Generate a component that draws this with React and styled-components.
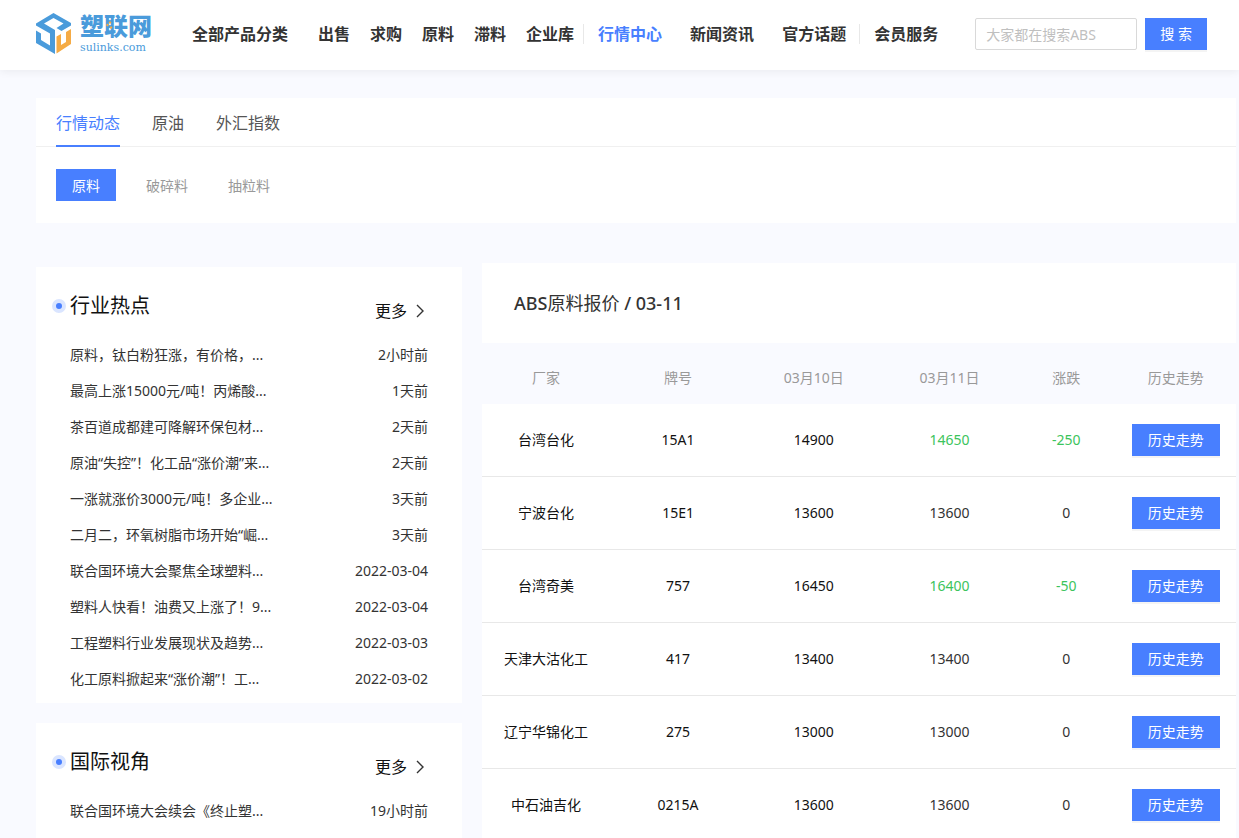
import React from "react";
import styled, { createGlobalStyle } from "styled-components";

const GlobalStyle = createGlobalStyle`
  * {
    box-sizing: border-box;
  }
  body {
    margin: 0;
    background: #f9faff;
    color: #333;
    font-family: "Noto Sans", "Noto Sans CJK SC", sans-serif;
    font-size: 14px;
    line-height: 20px;
  }
  a {
    color: inherit;
    text-decoration: none;
  }
  button,
  input {
    font-family: inherit;
    font-size: 14px;
  }
`;

const Header = styled.header`
  display: flex;
  align-items: center;
  height: 70px;
  padding: 0 32px 2px 36px;
  background: #fff;
  box-shadow: 0 2px 8px rgba(0, 0, 0, 0.06);
`;

const Logo = styled.a`
  display: flex;
  align-items: center;
  gap: 8px;
  flex: none;
  width: 156px;
  color: #4a9bdb;
`;

const LogoText = styled.span`
  position: relative;
  display: flex;
  flex-direction: column;
`;

const LogoName = styled.strong`
  font-family: "Liberation Sans", "Noto Sans CJK SC", sans-serif;
  font-size: 24px;
  font-weight: 900;
  line-height: 28px;
`;

const LogoDomain = styled.span`
  font-family: "DejaVu Serif", serif;
  font-size: 11px;
  line-height: 14px;
`;

const Spark = styled.svg`
  position: absolute;
  top: 8px;
  left: 26px;
`;

const Nav = styled.nav`
  display: flex;
  align-items: center;
  flex: none;
  font-size: 16px;
  font-weight: 600;
  line-height: 20px;
`;

const NavGroup = styled.div`
  display: flex;
  gap: ${(props) => props.$gap}px;
  padding: 0 ${(props) => props.$after}px 0 ${(props) => props.$before}px;
  border-left: ${(props) => (props.$line ? "1px solid #e8e8e8" : "none")};
`;

const NavLink = styled.a`
  color: ${(props) => (props.$active ? "#487fff" : "#333")};
  white-space: nowrap;
`;

const Search = styled.form`
  display: flex;
  flex: 1;
  gap: 8px;
  min-width: 0;
  margin-left: 37px;
`;

const SearchInput = styled.input`
  flex: 1;
  width: 0;
  min-width: 0;
  height: 32px;
  padding: 4px 10px;
  border: 1px solid #d9d9d9;
  border-radius: 2px;
  &::placeholder {
    color: #bfbfbf;
  }
`;

const Button = styled.button`
  flex: none;
  height: 32px;
  padding: 0 ${(props) => props.$pad || 16}px 2px;
  border: none;
  background: #487fff;
  color: #fff;
  white-space: nowrap;
  box-shadow: 0 2px 0 rgba(0, 0, 0, 0.045);
`;

const Page = styled.main`
  padding: 28px 3px 0 36px;
`;

const Filters = styled.section`
  background: #fff;
`;

const Tabs = styled.div`
  display: flex;
  gap: 32px;
  padding: 0 20px;
  border-bottom: 1px solid #f0f0f0;
`;

const Tab = styled.button`
  height: 49px;
  margin-bottom: -1px;
  padding: 0;
  border: none;
  border-bottom: 2px solid ${(props) => (props.$active ? "#487fff" : "transparent")};
  background: none;
  color: ${(props) => (props.$active ? "#487fff" : "#555")};
  font-size: 16px;
`;

const Kinds = styled.div`
  display: flex;
  padding: 22px 20px;
`;

const Kind = styled.button`
  height: 32px;
  margin-right: ${(props) => (props.$active ? "10px" : "0")};
  padding: 0 ${(props) => (props.$active ? "16px" : "20px")};
  border: none;
  background: ${(props) => (props.$active ? "#487fff" : "none")};
  color: ${(props) => (props.$active ? "#fff" : "#999")};
`;

const Columns = styled.div`
  display: flex;
  gap: 20px;
  margin-top: 40px;
`;

const Side = styled.aside`
  display: flex;
  flex-direction: column;
  flex: 0 0 426px;
  gap: 20px;
  padding-top: 4px;
`;

const Card = styled.section`
  padding: 24px 34px 6px 16px;
  background: #fff;
  &:last-child {
    flex: 1;
  }
`;

const CardHead = styled.div`
  display: flex;
  align-items: center;
  justify-content: space-between;
  height: 46px;
`;

const CardTitle = styled.h2`
  display: flex;
  align-items: center;
  gap: 4px;
  margin: 0;
  padding-bottom: 16px;
  color: #111;
  font-size: 20px;
  font-weight: 400;
  line-height: 30px;
`;

const Dot = styled.span`
  width: 14px;
  height: 14px;
  border: 4px solid #dae5ff;
  border-radius: 50%;
  background: #487fff;
`;

const More = styled.a`
  display: flex;
  align-items: center;
  gap: 8px;
  padding: 0 1px 6px 0;
  color: #111;
  font-size: 16px;
`;

const NewsList = styled.ul`
  margin: 0;
  padding: 0 0 0 18px;
  list-style: none;
`;

const NewsItem = styled.li`
  display: flex;
  justify-content: space-between;
  line-height: 36px;
`;

const Quotes = styled.section`
  flex: 1;
  min-width: 0;
`;

const QuotesTitle = styled.h1`
  margin: 0;
  padding: 0 32px;
  background: #fff;
  font-size: 18px;
  font-weight: 500;
  line-height: 80px;
`;

const Material = styled.span`
  font-weight: 400;
`;

const Table = styled.table`
  width: 100%;
  border-spacing: 0;
  table-layout: fixed;
  text-align: center;
`;

const Th = styled.th`
  width: ${(props) => props.$width};
  height: 61px;
  padding: 8px 0 0;
  color: #999;
  font-weight: 400;
`;

const Td = styled.td`
  height: 73px;
  padding: 0;
  border-bottom: 1px solid #e8e8e8;
  background: #fff;
  color: ${(props) => props.$color || "#111"};
`;

const navGroups = [
  { before: 0, after: 0, gap: 0, items: ["全部产品分类"] },
  { before: 30, after: 9, gap: 20, items: ["出售", "求购", "原料", "滞料", "企业库"] },
  { before: 14, after: 13, gap: 28, line: true, items: ["行情中心", "新闻资讯", "官方话题"] },
  { before: 14, after: 0, gap: 0, line: true, items: ["会员服务"] },
];

const tabs = ["行情动态", "原油", "外汇指数"];
const kinds = ["原料", "破碎料", "抽粒料"];

const cards = [
  {
    title: "行业热点",
    news: [
      ["原料，钛白粉狂涨，有价格，...", "2小时前"],
      ["最高上涨15000元/吨！丙烯酸...", "1天前"],
      ["茶百道成都建可降解环保包材...", "2天前"],
      ["原油“失控”！化工品“涨价潮”来...", "2天前"],
      ["一涨就涨价3000元/吨！多企业...", "3天前"],
      ["二月二，环氧树脂市场开始“崛...", "3天前"],
      ["联合国环境大会聚焦全球塑料...", "2022-03-04"],
      ["塑料人快看！油费又上涨了！9...", "2022-03-04"],
      ["工程塑料行业发展现状及趋势...", "2022-03-03"],
      ["化工原料掀起来“涨价潮”！工...", "2022-03-02"],
    ],
  },
  {
    title: "国际视角",
    news: [["联合国环境大会续会《终止塑...", "19小时前"]],
  },
];

const columns = [
  ["厂家", "17%"],
  ["牌号", "18%"],
  ["03月10日", "18%"],
  ["03月11日", "18%"],
  ["涨跌", "13%"],
  ["历史走势", "16%"],
];

const quotes = [
  ["台湾台化", "15A1", 14900, 14650],
  ["宁波台化", "15E1", 13600, 13600],
  ["台湾奇美", "757", 16450, 16400],
  ["天津大沽化工", "417", 13400, 13400],
  ["辽宁华锦化工", "275", 13000, 13000],
  ["中石油吉化", "0215A", 13600, 13600],
];

function LogoMark() {
  return (
    <svg width="36" height="42" viewBox="0 0 36 42" aria-hidden="true">
      <path
        fill="#4a9bdb"
        d="M0 10.500 17.500 0 35 10V12.500L25.500 18 20.500 15 27.500 10.500 17.500 5 8 10.500 19 17V41L0 30V17.500L5 20.500V27L14 32.500V20.500L0 12.500Z"
      />
      <path fill="#f5ab45" d="M35 16V31L20.500 40.500V23.500L25 21V32L30 29V19Z" />
    </svg>
  );
}

function NewsCard({ title, news }) {
  return (
    <Card>
      <CardHead>
        <CardTitle>
          <Dot />
          {title}
        </CardTitle>
        <More href="#">
          更多
          <svg width="12" height="14" viewBox="0 0 12 14" fill="none" stroke="#333" strokeWidth="1.4" aria-hidden="true">
            <path d="M2 1l6 6-6 6" />
          </svg>
        </More>
      </CardHead>
      <NewsList>
        {news.map(([text, time]) => (
          <NewsItem key={text}>
            <a href="#">{text}</a>
            <span>{time}</span>
          </NewsItem>
        ))}
      </NewsList>
    </Card>
  );
}

function App() {
  return (
    <>
      <GlobalStyle />
      <Header>
        <Logo href="#">
          <LogoMark />
          <LogoText>
            <LogoName>塑联网</LogoName>
            <LogoDomain>sulinks.com</LogoDomain>
            <Spark width="7" height="9" viewBox="0 0 7 9" aria-hidden="true">
              <path fill="#f5ab45" d="M4 0l1.500 1.500L4 3 2.500 1.500zM1.500 2.500 3 4 1.500 5.500 0 4zM5 5l1.500 1.500L5 8 3.500 6.500z" />
            </Spark>
          </LogoText>
        </Logo>
        <Nav>
          {navGroups.map((group) => (
            <NavGroup
              key={group.items[0]}
              $before={group.before}
              $after={group.after}
              $gap={group.gap}
              $line={group.line}
            >
              {group.items.map((item) => (
                <NavLink key={item} href="#" $active={item === "行情中心"}>
                  {item}
                </NavLink>
              ))}
            </NavGroup>
          ))}
        </Nav>
        <Search>
          <SearchInput placeholder="大家都在搜索ABS" aria-label="搜索" />
          <Button type="button" $pad={15}>
            搜 索
          </Button>
        </Search>
      </Header>
      <Page>
        <Filters>
          <Tabs>
            {tabs.map((tab, i) => (
              <Tab key={tab} type="button" $active={i === 0}>
                {tab}
              </Tab>
            ))}
          </Tabs>
          <Kinds>
            {kinds.map((kind, i) => (
              <Kind key={kind} type="button" $active={i === 0}>
                {kind}
              </Kind>
            ))}
          </Kinds>
        </Filters>
        <Columns>
          <Side>
            {cards.map((card) => (
              <NewsCard key={card.title} {...card} />
            ))}
          </Side>
          <Quotes>
            <QuotesTitle>
              ABS<Material>原料报价</Material> / 03-11
            </QuotesTitle>
            <Table>
              <thead>
                <tr>
                  {columns.map(([name, width]) => (
                    <Th key={name} $width={width}>
                      {name}
                    </Th>
                  ))}
                </tr>
              </thead>
              <tbody>
                {quotes.map(([maker, grade, before, now]) => {
                  const color = now < before ? "#3cc45c" : "#333";
                  return (
                    <tr key={maker}>
                      <Td>{maker}</Td>
                      <Td>{grade}</Td>
                      <Td>{before}</Td>
                      <Td $color={color}>{now}</Td>
                      <Td $color={color}>{now - before}</Td>
                      <Td>
                        <Button type="button">历史走势</Button>
                      </Td>
                    </tr>
                  );
                })}
              </tbody>
            </Table>
          </Quotes>
        </Columns>
      </Page>
    </>
  );
}

export default App;
